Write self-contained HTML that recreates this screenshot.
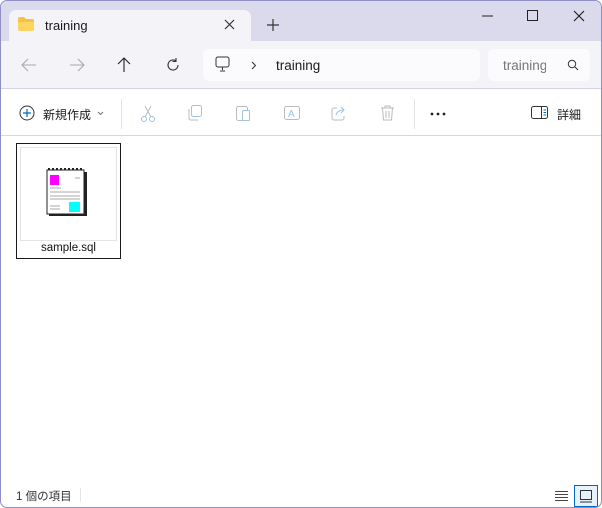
<!DOCTYPE html><html><head><meta charset="utf-8"><style>
*{margin:0;padding:0;box-sizing:border-box}
body{width:602px;height:508px;overflow:hidden;font-family:"Liberation Sans","Noto Sans CJK JP",sans-serif;background:#fff;position:relative}
.win{position:absolute;left:0;top:0;width:602px;height:508px;border:1px solid #8f8fc6;border-radius:7px;overflow:hidden;background:#fff}
.title{position:absolute;left:0;top:0;width:600px;height:40px;background:#dadaec}
.tab{position:absolute;left:8px;top:9px;width:242px;height:31px;background:#f3f3f8;border-radius:7px 7px 0 0}
.nav{position:absolute;left:0;top:40px;width:600px;height:48px;background:#f3f3f8;border-bottom:1px solid #d3d3e3}
.abs{position:absolute}
.t{font-size:13px;color:#1a1a1a}
.tb{position:absolute;left:0;top:89px;width:600px;height:46px;background:#fff;border-bottom:1px solid #d8d8d8}
svg{position:absolute}
</style></head><body><div class="win">
<div class="title"></div>
<div class="tab"></div>
<svg style="left:17px;top:16px" width="16" height="14"><path d="M0 2a2 2 0 0 1 2-2h4l2 2h6a2 2 0 0 1 2 2v8a2 2 0 0 1-2 2H2a2 2 0 0 1-2-2z" fill="#f5c342"/><path d="M0 5h16v7a2 2 0 0 1-2 2H2a2 2 0 0 1-2-2z" fill="#fbd462"/></svg>
<div class="abs t" style="left:44px;top:17px">training</div>
<svg style="left:223px;top:18px" width="11" height="11"><path d="M1 1l9 9M10 1l-9 9" stroke="#333" stroke-width="1.2"/></svg>
<svg style="left:266px;top:18px" width="12" height="12"><path d="M6 0v12M0 6h12" stroke="#333" stroke-width="1.2"/></svg>
<svg style="left:481px;top:14px" width="12" height="2"><path d="M0 1h11" stroke="#222" stroke-width="1"/></svg>
<svg style="left:526px;top:9px" width="11" height="11"><rect x=".5" y=".5" width="10" height="10" fill="none" stroke="#222"/></svg>
<svg style="left:572px;top:9px" width="12" height="12"><path d="M1 1l10 10M11 1l-10 10" stroke="#222" stroke-width="1.2"/></svg>
<div class="nav"></div>
<svg style="left:20px;top:57px" width="16" height="14"><path d="M15 7H1M7 1L1 7l6 6" stroke="#aaa" fill="none" stroke-width="1.1"/></svg>
<svg style="left:68px;top:57px" width="16" height="14"><path d="M1 7h14M9 1l6 6-6 6" stroke="#aaa" fill="none" stroke-width="1.1"/></svg>
<svg style="left:116px;top:56px" width="14" height="16"><path d="M7 15V1M1 7l6-6 6 6" stroke="#222" fill="none" stroke-width="1.1"/></svg>
<svg style="left:164px;top:56px" width="16" height="16"><path d="M13 8a5 5 0 1 1-2-4M11 1v3.5h-3.5" stroke="#333" fill="none" stroke-width="1.1"/></svg>
<div class="abs" style="left:202px;top:48px;width:277px;height:32px;background:#fbfbfd;border-radius:5px"></div>
<div class="abs" style="left:487px;top:48px;width:102px;height:32px;background:#fbfbfd;border-radius:5px"></div>
<svg style="left:214px;top:55px" width="16" height="17"><rect x="1" y="1" width="13" height="10" rx="2" fill="none" stroke="#333"/><path d="M7.5 11v3M5 15h5" stroke="#333"/></svg>
<svg style="left:250px;top:60px" width="6" height="9"><path d="M1 1l3.5 3.5L1 8" stroke="#333" fill="none"/></svg>
<div class="abs t" style="left:275px;top:57px;font-size:13.5px">training</div>
<div class="abs" style="left:502px;top:57px;font-size:13.5px;color:#777;width:43px;overflow:hidden;white-space:nowrap">training</div>
<svg style="left:566px;top:58px" width="12" height="12"><circle cx="5" cy="5" r="3.7" fill="none" stroke="#333"/><path d="M8 8l3 3" stroke="#333"/></svg>
<div class="tb"></div>
<svg style="left:18px;top:104px" width="16" height="16"><circle cx="8" cy="8" r="7" fill="none" stroke="#333"/><path d="M8 4v8M4 8h8" stroke="#0067c0" stroke-width="1.2"/></svg>
<div class="abs" style="left:42px;top:105px;font-size:12px;color:#1a1a1a">新規作成</div>
<svg style="left:96px;top:110px" width="7" height="5"><path d="M1 1l2.5 2.5L6 1" stroke="#777" fill="none"/></svg>
<div class="abs" style="left:120px;top:98px;width:1px;height:30px;background:#e2e2e2"></div>
<div class="abs" style="left:413px;top:98px;width:1px;height:30px;background:#e2e2e2"></div>
<svg style="left:139px;top:104px" width="16" height="18"><circle cx="4" cy="14" r="2.5" fill="none" stroke="#9cc3e8"/><circle cx="12" cy="14" r="2.5" fill="none" stroke="#9cc3e8"/><path d="M5 12L11 1M11 12L5 1" stroke="#bbb"/></svg>
<svg style="left:186px;top:104px" width="16" height="16"><rect x="4.5" y=".5" width="10" height="11" rx="2" fill="none" stroke="#9cc3e8"/><path d="M2 4v9a2 2 0 0 0 2 2h7" stroke="#bbb" fill="none"/></svg>
<svg style="left:234px;top:103px" width="16" height="18"><rect x="1.5" y="2.5" width="11" height="14" rx="2" fill="none" stroke="#bbb"/><rect x="7.5" y="6.5" width="7" height="10" rx="1" fill="#fff" stroke="#9cc3e8"/></svg>
<svg style="left:282px;top:104px" width="18" height="16"><rect x="1.5" y="1.5" width="15" height="13" rx="2" fill="none" stroke="#bbb"/><text x="5" y="12" font-size="10" fill="#9cc3e8" font-family="Liberation Sans">A</text></svg>
<svg style="left:330px;top:104px" width="16" height="16"><path d="M6 3H3a2 2 0 0 0-2 2v8a2 2 0 0 0 2 2h8a2 2 0 0 0 2-2v-2" stroke="#bbb" fill="none"/><path d="M5 10c1-4 4-5 8-5M10 2l3 3-3 3" stroke="#9cc3e8" fill="none"/></svg>
<svg style="left:379px;top:104px" width="15" height="17"><path d="M1 3h13M5 3V1h5v2M2.5 3l1 12h8l1-12M6 6v7M9 6v7" stroke="#bbb" fill="none"/></svg>
<svg style="left:429px;top:111px" width="18" height="4"><circle cx="2" cy="2" r="1.4" fill="#222"/><circle cx="8" cy="2" r="1.4" fill="#222"/><circle cx="14" cy="2" r="1.4" fill="#222"/></svg>
<svg style="left:530px;top:105px" width="18" height="14"><rect x=".5" y=".5" width="16" height="12" rx="2" fill="none" stroke="#333"/><path d="M10.5 1v11" stroke="#333"/><path d="M12.5 4h2.5M12.5 6.5h2.5M12.5 9h2.5" stroke="#0067c0"/></svg>
<div class="abs" style="left:556px;top:105px;font-size:12px;color:#1a1a1a">詳細</div>
<div class="abs" style="left:15px;top:142px;width:105px;height:116px;border:1px solid #1a1a1a"></div>
<div class="abs" style="left:19px;top:146px;width:97px;height:94px;border:1px solid #e4e4e4"></div>
<svg style="left:44px;top:167px" width="44" height="50" shape-rendering="crispEdges">
<rect x="4" y="4" width="38" height="44" fill="#222"/>
<rect x="2" y="2" width="37" height="44" fill="#fff" stroke="#222"/>
<path d="M4 2v-2M8 2v-2M12 2v-2M16 2v-2M20 2v-2M24 2v-2M28 2v-2M32 2v-2M36 2v-2" stroke="#222" stroke-width="2"/>
<rect x="5" y="7" width="9" height="10" fill="#f0f"/>
<path d="M5 20h11M5 24h30M5 28h30M5 31h30M5 38h10M5 41h10M30 10h5" stroke="#aaa"/>
<rect x="24" y="34" width="11" height="10" fill="#0ff"/>
</svg>
<div class="abs" style="left:15px;top:241px;width:105px;text-align:center;font-size:11.5px;color:#111">sample.sql</div>
<div class="abs" style="left:15px;top:487px;font-size:11.5px;color:#333">1 個の項目</div>
<div class="abs" style="left:79px;top:487px;width:1px;height:14px;background:#e5e5e5"></div>
<svg style="left:554px;top:489px" width="14" height="12"><path d="M0 1.5h13M0 4.5h13M0 7.5h13M0 10.5h13" stroke="#444"/></svg>
<div class="abs" style="left:573px;top:484px;width:24px;height:22px;border:1px solid #0067c0;background:#e5f1fb"></div>
<svg style="left:579px;top:489px" width="13" height="13"><rect x=".5" y=".5" width="11" height="9" fill="none" stroke="#333"/><path d="M0 12h12" stroke="#333"/></svg>
</div></body></html>
